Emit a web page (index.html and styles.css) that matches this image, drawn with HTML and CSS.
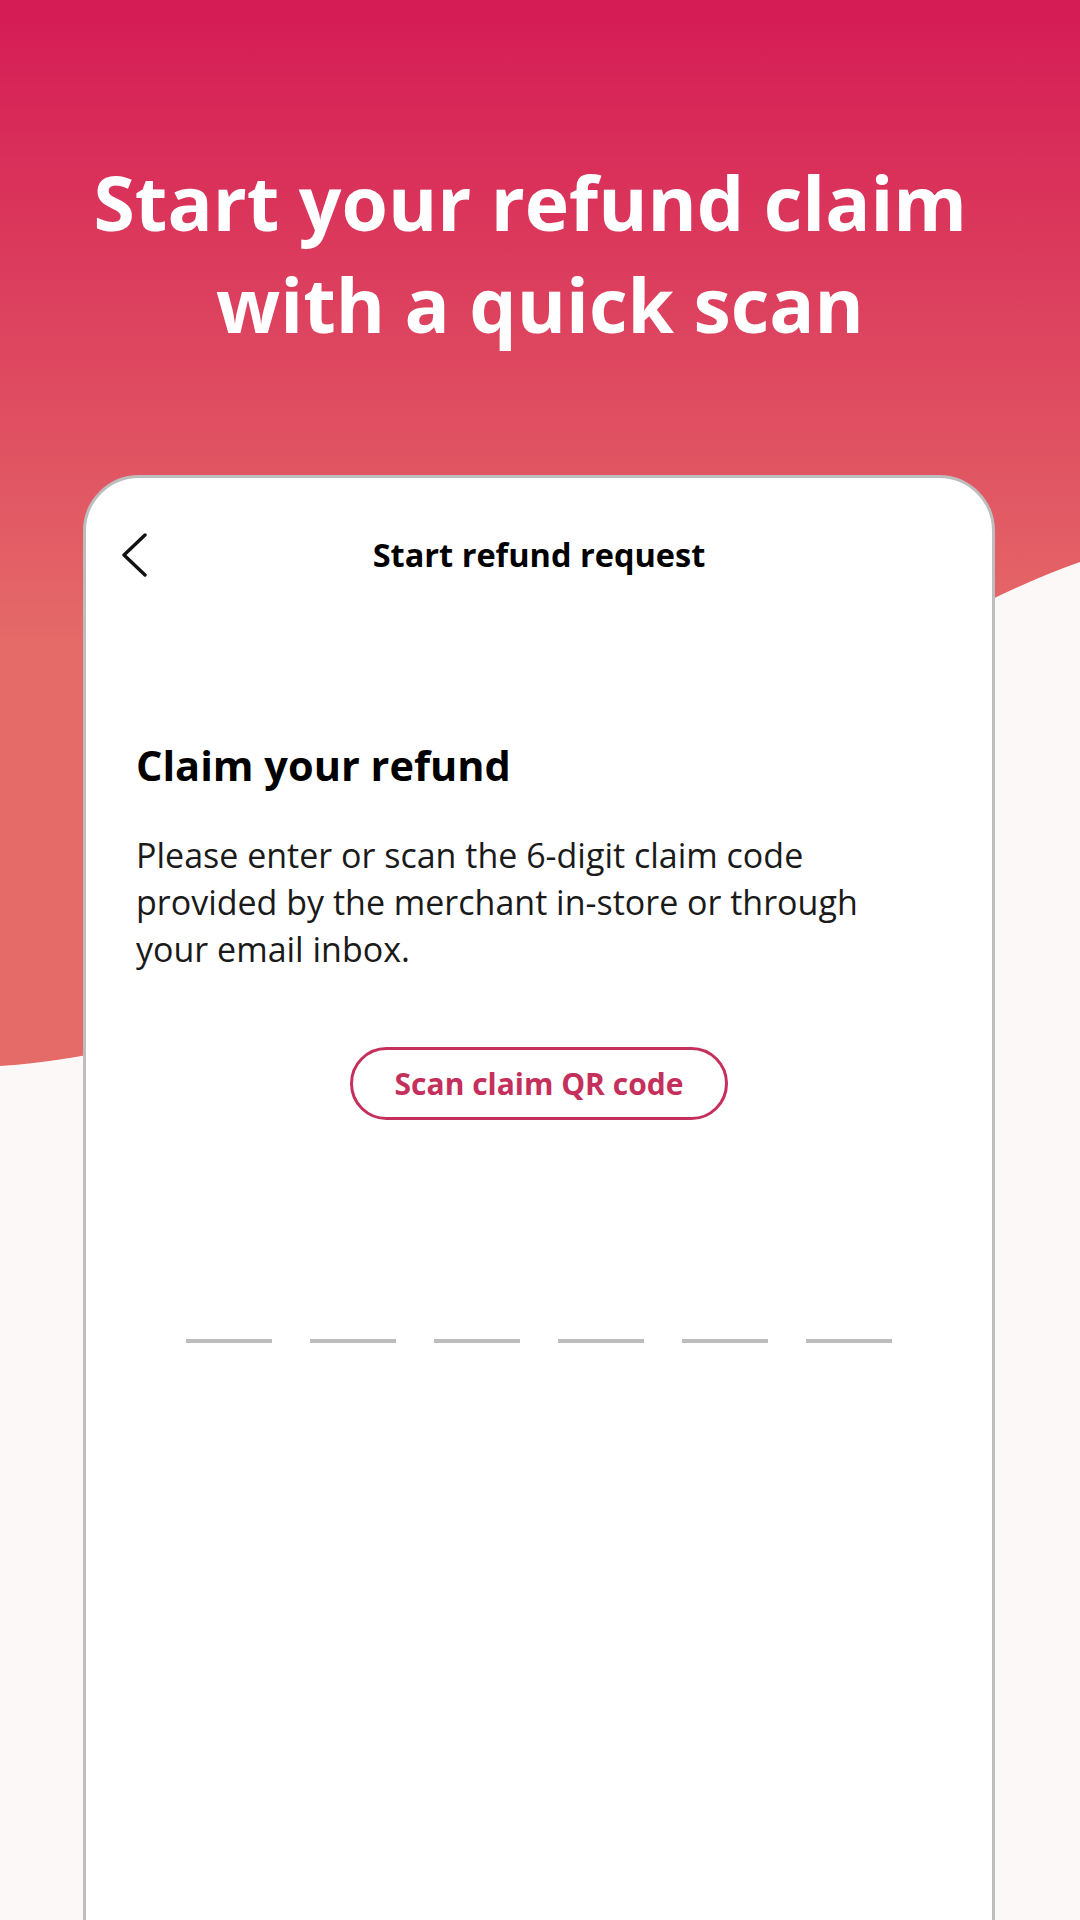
FILE: index.html
```html
<!DOCTYPE html>
<html lang="en">
<head>
    <meta charset="UTF-8">
    <meta name="viewport" content="width=device-width, initial-scale=1.0">
    <title>Start your refund claim</title>
    <link rel="stylesheet" href="styles.css">
</head>
<body>
    <div class="screen">
        <!-- pink wave behind the headline and the phone -->
        <svg class="backdrop" viewBox="0 0 1080 1920" preserveAspectRatio="none" aria-hidden="true">
            <defs>
                <linearGradient id="waveFill" x1="0" y1="0" x2="0" y2="650" gradientUnits="userSpaceOnUse">
                    <stop offset="0" stop-color="#d51b55"/>
                    <stop offset="1" stop-color="#e56b68"/>
                </linearGradient>
            </defs>
            <path d="M0 0 H1080 V562 C780 668 400 1040 0 1066 Z" fill="url(#waveFill)"/>
        </svg>

        <h1 class="headline">Start your refund claim&nbsp;<br>with a quick scan</h1>

        <div class="phone">
            <header class="phone-header">
                <button class="back-btn" aria-label="Back">
                    <svg width="26" height="44" viewBox="0 0 26 44">
                        <polyline points="24,2 3,22 24,42" fill="none" stroke="#111" stroke-width="3.4" stroke-linecap="round" stroke-linejoin="round"/>
                    </svg>
                </button>
                <h2 class="phone-title">Start refund request</h2>
                <span></span>
            </header>

            <section class="claim">
                <h3 class="claim-title">Claim your refund</h3>
                <p class="claim-text">Please enter or scan the 6-digit claim code provided by the merchant in-store or through your email inbox.</p>

                <div class="scan-row">
                    <button class="scan-btn">Scan claim QR code</button>
                </div>

                <div class="code-slots">
                    <span class="slot"></span>
                    <span class="slot"></span>
                    <span class="slot"></span>
                    <span class="slot"></span>
                    <span class="slot"></span>
                    <span class="slot"></span>
                </div>
            </section>
        </div>
    </div>
</body>
</html>
```

FILE: styles.css
```css
* {
    box-sizing: border-box;
}

body {
    margin: 0;
    font-family: 'Open Sans', 'Noto Sans', sans-serif;
    background-color: #fdf8f8;
}

.screen {
    position: relative;
    width: 1080px;
    height: 1920px;
    overflow: hidden;
    padding-top: 151px;
}

.backdrop {
    position: absolute;
    top: 0;
    left: 0;
    width: 1080px;
    height: 1920px;
    z-index: 0;
}

.headline {
    position: relative;
    margin: 0;
    color: #fff;
    font-size: 75px;
    font-weight: 700;
    line-height: 102px;
    text-align: center;
}

.phone {
    position: relative;
    margin: 120px 0 0 83px;
    width: 912px;
    height: 1600px;
    background: #fff;
    border: 3px solid #bdbdbd;
    border-radius: 56px 56px 0 0;
}

.phone-header {
    display: grid;
    grid-template-columns: 1fr auto 1fr;
    align-items: center;
    margin-top: 55px;
}

.back-btn {
    justify-self: start;
    margin-left: 35px;
    padding: 0;
    border: none;
    background: none;
    display: flex;
}

.phone-title {
    margin: 0;
    font-size: 32.5px;
    font-weight: 700;
    line-height: 44px;
    color: #000;
}

.claim {
    padding: 160px 50px 0;
}

.claim-title {
    margin: 0;
    font-size: 41.5px;
    font-weight: 700;
    line-height: 56px;
    color: #000;
}

.claim-text {
    margin: 39px 0 0;
    max-width: 770px;
    font-size: 34px;
    line-height: 47px;
    color: #1a1a1a;
}

.scan-row {
    display: flex;
    justify-content: center;
    margin-top: 74px;
}

.scan-btn {
    height: 73px;
    padding: 0 42px;
    border: 3px solid #c4305b;
    border-radius: 37px;
    background: #fff;
    color: #c4305b;
    font-family: inherit;
    font-size: 30px;
    font-weight: 700;
}

.code-slots {
    display: flex;
    justify-content: center;
    gap: 38px;
    margin-top: 219px;
}

.slot {
    width: 86px;
    height: 4px;
    background: #bdbdbd;
}
```
